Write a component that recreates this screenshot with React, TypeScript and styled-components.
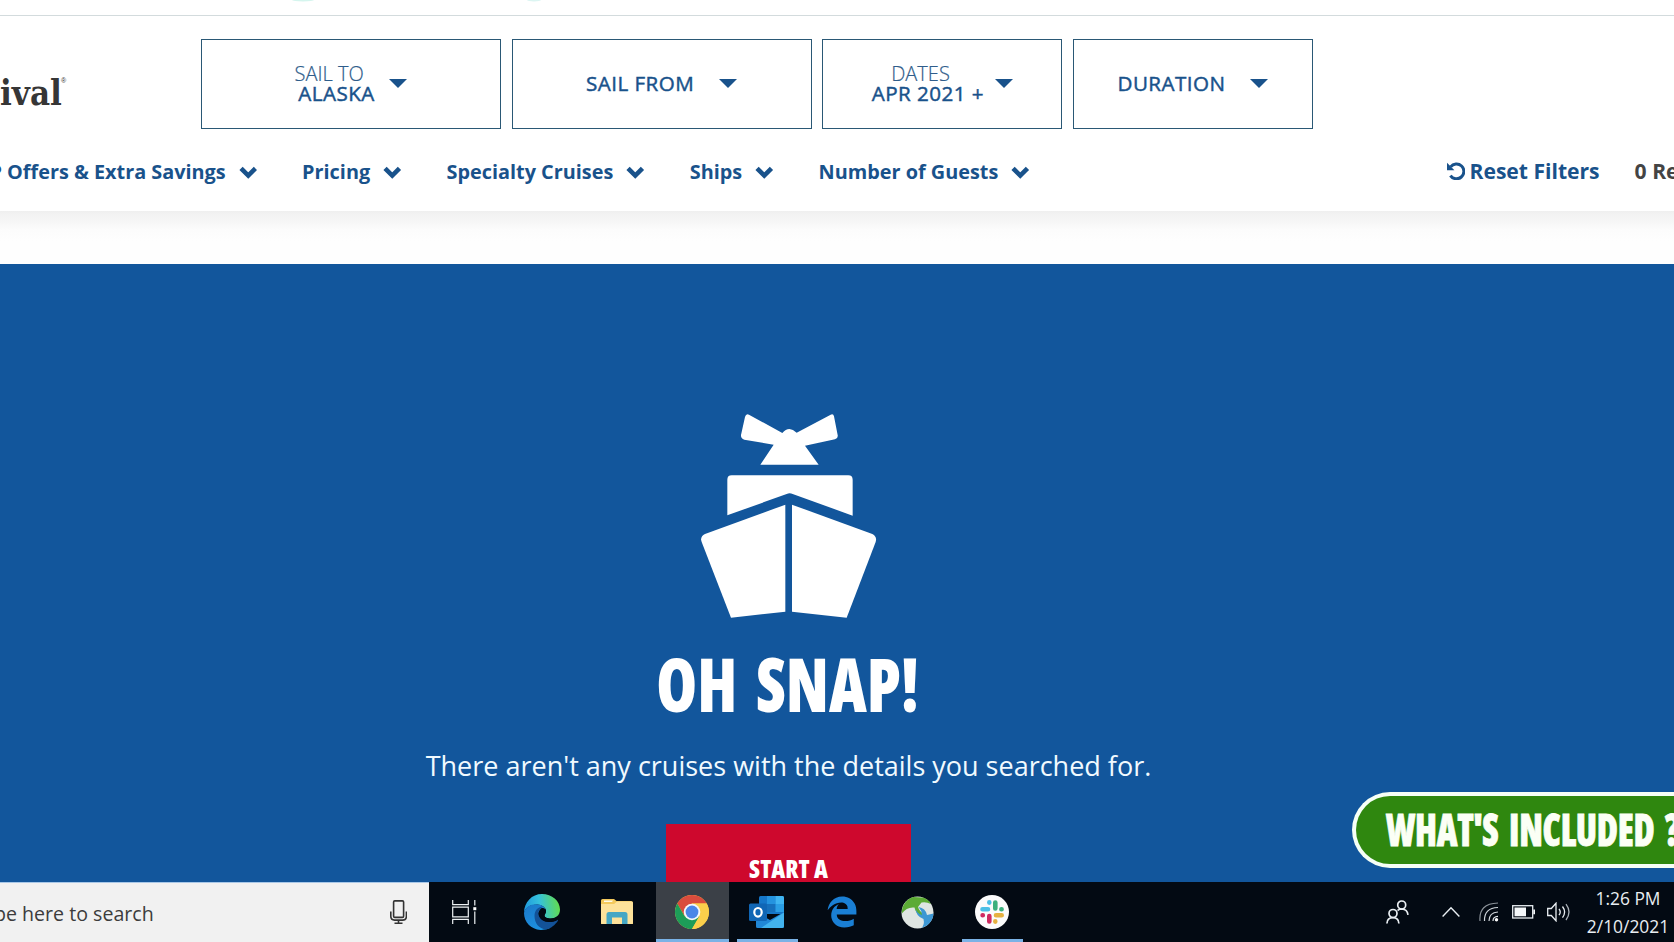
import React from "react";
import styled, { createGlobalStyle } from "styled-components";
import { FaEdgeLegacy } from "react-icons/fa6";

const navy = "#19528b";
const sans = `"Open Sans", "Noto Sans", sans-serif`;

const GlobalStyle = createGlobalStyle`
  * { box-sizing: border-box; }
  body { margin: 0; background: #fff; font-family: ${sans}; overflow: hidden; }
  svg { display: block; flex: none; }
`;

const Screen = styled.div`
  position: relative;
  display: flex;
  flex-direction: column;
  width: 1674px;
  height: 942px;
  overflow: hidden;
`;

const BrowserEdge = styled.div`
  height: 16px;
  border-bottom: 1px solid #d3dbdd;
`;

const Header = styled.header`
  display: flex;
  flex-direction: column;
  height: 195px;
  padding-top: 23px;
`;

const SearchRow = styled.div`
  display: flex;
  align-items: center;
  height: 90px;
`;

const Logo = styled.div`
  display: flex;
  align-items: flex-start;
  flex: 0 0 201px;
  height: 34px;
  margin-top: 10px;
  color: #363636;
`;

const LogoWord = styled.span`
  width: 61px;
  font: 700 36px/40px "DejaVu Serif", serif;
  font-stretch: 75%;
  transform: scaleX(0.96);
  transform-origin: 0 0;
`;

const LogoMark = styled.span`
  margin-top: 5px;
  font: 7px/8px "Liberation Sans", sans-serif;
`;

const Pickers = styled.div`
  display: flex;
  gap: 10.67px;
`;

const Picker = styled.button<{ $width: number; $gap: number }>`
  display: flex;
  align-items: center;
  justify-content: center;
  gap: ${(p) => p.$gap}px;
  width: ${(p) => p.$width}px;
  height: 90px;
  padding: 0 0 2px;
  border: 1px solid #2a5875;
  background: #fff;
  color: ${navy};
  font-family: ${sans};
`;

const PickerText = styled.span`
  display: flex;
  flex-direction: column;
  align-items: center;
  font-size: 20.6px;
  line-height: 20px;
  white-space: nowrap;
`;

const PickerLabel = styled.span`
  margin: 1px 14.6px -1px 0;
  font-size: 20px;
  font-weight: 300;
  color: #2f5d8b;
  -webkit-text-stroke: 0.2px #2f5d8b;
`;

const PickerValue = styled.span`
  font-weight: 400;
  letter-spacing: 0.45px;
  -webkit-text-stroke: 0.45px ${navy};
`;

const Triangle = styled.i`
  border: solid transparent;
  border-width: 9px 9px 0;
  border-top-color: ${navy};
`;

const FilterRow = styled.div`
  display: flex;
  align-items: center;
  justify-content: space-between;
  height: 24px;
  margin-top: 30px;
  line-height: 24px;
  font-weight: 700;
  white-space: nowrap;
  color: ${navy};
`;

const Filters = styled.nav`
  display: flex;
  gap: 45px;
  margin-left: -10.6px;
  padding-top: 2px;
`;

const Filter = styled.a`
  display: flex;
  align-items: center;
  gap: 12.9px;
  font-size: 19.85px;
  svg { margin-top: 1px; }
`;

const FilterStatus = styled.div`
  display: flex;
  gap: 35px;
  width: 227.5px;
  overflow: hidden;
  font-size: 21.1px;
`;

const Reset = styled.a`
  display: flex;
  align-items: center;
  gap: 5px;
  height: 24px;
`;

const Count = styled.span`
  color: #444;
`;

const HeaderShadow = styled.div`
  height: 53px;
  background: linear-gradient(#efefef 0, #f2f2f2 3px, #f7f7f7 12px, #fcfcfc 19px, #fefefe 30px);
`;

const Hero = styled.main`
  display: flex;
  flex-direction: column;
  align-items: center;
  height: 618px;
  padding: 149px 97px 0 0;
  overflow: hidden;
  background: #12569c;
  color: #fff;
`;

const condensed = `font-family: ${sans}; font-stretch: 75%; font-weight: 800; white-space: nowrap;`;

const Title = styled.h1`
  ${condensed}
  margin: 24.5px 0 0;
  font-size: 74px;
  line-height: 80px;
  word-spacing: 8px;
  transform: translateX(-1px) scaleX(0.89);
`;

const Message = styled.p`
  margin: 21.5px 0 0;
  font-size: 27px;
  line-height: 40px;
  color: #f1faff;
`;

const StartButton = styled.button`
  ${condensed}
  flex: none;
  width: 245px;
  height: 120px;
  margin: 38.5px 0 0;
  padding: 29.5px 0 0;
  border: 0;
  background: #ce082d;
  color: #fff;
  font-size: 24.3px;
  line-height: 30px;
  display: flex;
  justify-content: center;
`;

const IncludedTab = styled.aside`
  position: absolute;
  left: 1352px;
  top: 792px;
  width: 322px;
  height: 76px;
  padding: 8.5px 0 0 30px;
  overflow: hidden;
  border: 4px solid #f6fff6;
  border-right: 0;
  border-radius: 38px 0 0 38px;
  background: #2f870f;
`;

const IncludedText = styled.span`
  ${condensed}
  display: inline-block;
  font-size: 43.4px;
  line-height: 50px;
  letter-spacing: -0.35px;
  word-spacing: 5.5px;
  color: #fbfff5;
  transform: scaleX(0.833);
  transform-origin: 0 0;
  -webkit-text-stroke: 0.8px #fbfff5;
`;

const Taskbar = styled.footer`
  display: flex;
  height: 60px;
  background: #030a13;
  color: #e9eef2;
`;

const SearchBox = styled.div`
  display: flex;
  align-items: center;
  justify-content: space-between;
  width: 429px;
  padding: 0 22px 0 0;
  border-top: 1px solid #a9c8e8;
  background: #f1f1f1;
  color: #3c3c3c;
  font-size: 19.6px;
  white-space: nowrap;
  svg { margin-bottom: 1.5px; }
`;

const SearchText = styled.span`
  margin: 1px 0 0 -6px;
`;

const TaskView = styled.div`
  display: grid;
  place-items: center;
  width: 75.5px;
  padding-right: 4.5px;
`;

const AppCell = styled.div`
  display: flex;
  justify-content: center;
  width: 75px;
`;

const AppButton = styled.div<{ $active?: boolean; $open?: boolean }>`
  display: grid;
  place-items: center;
  width: ${(p) => (p.$active ? 73 : 61)}px;
  border-bottom: 3px solid ${(p) => (p.$active || p.$open ? "#7ab2e6" : "transparent")};
  padding-top: 3px;
  background: ${(p) => (p.$active ? "#3b4047" : "none")};
  background-clip: padding-box;
`;

const Tray = styled.div`
  display: flex;
  align-items: center;
  margin-left: auto;
  padding-right: 4.5px;
`;

const TrayIcon = styled.span<{ $after: number }>`
  margin-right: ${(p) => p.$after}px;
`;

const Clock = styled.div`
  width: 83px;
  text-align: center;
  font-size: 17.4px;
  line-height: 28px;
  white-space: nowrap;
`;

const Chevron = () => (
  <svg width="18.5" height="13" viewBox="0 0 18 12" fill="none" stroke={navy} strokeWidth="4.5">
    <path d="M2 2l7 7 7-7" />
  </svg>
);

const ResetIcon = () => (
  <svg width="18" height="18" viewBox="0 0 18 18" fill="none">
    <path d="M3.6 4.9A7.4 7.4 0 1 1 3.4 13.6" stroke={navy} strokeWidth="3" />
    <path d="M0 .8v7.4h7.4z" fill={navy} />
  </svg>
);

const ShipIcon = () => (
  <svg width="176.67" height="206.67" viewBox="120 70 530 620" fill="#fff">
    <path d="M267 75L367 130Q387 107 410 129L512 75Q520 71 522 80L533 136Q535 146 525 149L435 168L476 225H301L341 165L253 150Q242 147 243 136L255 82Q258 71 267 75Z" />
    <path d="M215 257H565Q578 257 578 270V378L398 313Q389 309 380 313L202 377V270Q202 257 215 257Z" />
    <path d="M376 345V666L213 684L125 457Q119 441 135 433Z" />
    <path d="M396 345V666L560 684L647 457Q652 441 637 433Z" />
  </svg>
);

const MicIcon = () => (
  <svg width="17" height="24" viewBox="0 0 17 24" fill="none" stroke="#333" strokeWidth="1.6">
    <rect x="3.6" y=".9" width="10" height="16.5" rx="1.2" />
    <path d="M.8 11.5v4.8q0 3.8 3.8 3.8h8q3.8 0 3.8-3.8v-4.8M8.5 20v3M4.5 23.2h8" />
  </svg>
);

const TaskViewIcon = () => (
  <svg width="25" height="24" viewBox="0 0 25 24" fill="none" stroke="#eef2f4" strokeWidth="1.2">
    <path d="M.7 0v4.6h15.6V0M.7 24v-4.6h15.6V24M.7 7.2h15.6v9.6H.7zM22.8 0v5.4M22.8 11.4V24" />
    <path d="M21.3 7.2h3v3h-3z" fill="#fff" stroke="none" />
  </svg>
);

const EdgeIcon = () => (
  <svg width="36" height="36" viewBox="0 0 36 36">
    <defs>
      <linearGradient id="edgeTop" x1="0" y1=".6" x2="1" y2=".5">
        <stop offset="0" stopColor="#1e98de" />
        <stop offset=".45" stopColor="#35c1dc" />
        <stop offset="1" stopColor="#63dc4c" />
      </linearGradient>
      <linearGradient id="edgeBody" x1="0" y1="0" x2=".4" y2="1">
        <stop offset="0" stopColor="#1b78c8" />
        <stop offset="1" stopColor="#1d90e0" />
      </linearGradient>
    </defs>
    <path d="M0 19C0 8 8 0 18 0s18 7 18 15.5c0 6-4.5 9-9 9-4 0-6.500-1.500-6.500-2.800 0-1.200 1.500-1.800 1.500-4.700 0-3.500-4-6.500-9-6.500C6 10.500 1 14 0 19z" fill="url(#edgeTop)" />
    <path d="M0 19c1-5.500 6-8.800 12-8.800 5.500 0 9.500 3 10 6-1.500-1.500-8-.7-8.500 5C13 28 20 34.500 26 34 22 36 18 36 16.500 35.900 7 35.500 0 28 0 19z" fill="url(#edgeBody)" />
    <path d="M10.500 22c0-6 4-9.500 8.500-9.500-3 1.500-4.800 4.500-4.500 7.500.5 5 5.500 8 10.500 8 3.500 0 6-1 7.800-2 1-.5 1.500.3 1 1C31 31 27 34.500 22 35.400 15 35 10.500 29 10.500 22z" fill="#135298" />
    <path d="M22 16c.2 3-1.500 4-1.500 5.700 0 1.300 2.500 2.800 6.500 2.800 2.500 0 5-1 6.700-2.800L33.500 26c-6 3.300-13 2.600-16.700-1.500-2.800-3.300-2.600-8.500.9-10.500 2 0 3.800.6 4.300 2z" fill="#030a13" />
  </svg>
);

const FolderIcon = () => (
  <svg width="32" height="26" viewBox="0 0 32 26">
    <path d="M0 1.500Q0 0 1.500 0H13l2.500 2H30q2 0 2 2v21H0z" fill="#f3c95c" />
    <path d="M0 5h13l3-2.500h14.500Q32 2.500 32 4v19.500Q32 25 30.500 25h-29Q0 25 0 23.500z" fill="#fde29a" />
    <path d="M3 1.500h9L11 3H3z" fill="#fffbe8" />
    <path d="M5.500 25V15.500q0-2.500 2.500-2.500h16q2.500 0 2.500 2.500V25H21v-6.500H11V25z" fill="#45a7c4" />
  </svg>
);

const ChromeIcon = () => (
  <svg width="34" height="34" viewBox="0 0 34 34">
    <circle cx="17" cy="17" r="17" fill="#fbcf4b" />
    <path d="M2.300 8.500A17 17 0 0 1 31.700 8.500H17L9.600 21.200z" fill="#d94c3d" />
    <path d="M2.300 8.500A17 17 0 0 0 17 34L24.400 21.200 9.600 21.200z" fill="#1d9d58" />
    <path d="M31.700 8.500A17 17 0 0 1 17 34L24.400 21.200 17 8.500z" fill="#fbcf4b" />
    <circle cx="17" cy="17" r="8.300" fill="#f4f7fa" />
    <circle cx="17" cy="17" r="6.400" fill="#4a86e8" />
  </svg>
);

const OutlookIcon = () => (
  <svg width="37" height="33" viewBox="0 0 37 33">
    <path d="M10 1.500Q10 0 11.500 0h22Q35 0 35 1.500V18H10z" fill="#1577c9" />
    <path d="M18 0h8.500v8H18z" fill="#2493df" />
    <path d="M26.500 0h7Q35 0 35 1.500V8h-8.500z" fill="#3fb4f1" />
    <path d="M18 8h8.500v8H18z" fill="#1670bd" />
    <path d="M26.500 8H35v8h-8.500z" fill="#2a9ee5" />
    <path d="M7 16l14 8 14-8v14.500q0 1.500-1.500 1.500h-25Q7 32 7 30.500z" fill="#2187d6" />
    <path d="M35 16.500V30q0 2-2 2H12z" fill="#42b3ee" />
    <rect y="7.5" width="18" height="17.5" rx="1.5" fill="#1066b5" />
    <ellipse cx="9" cy="16.3" rx="3.7" ry="4.3" fill="none" stroke="#fff" strokeWidth="2.2" />
  </svg>
);

const AnyConnectIcon = () => (
  <svg width="33" height="33" viewBox="0 0 33 33">
    <circle cx="16.5" cy="16.5" r="16" fill="#dfe5e2" />
    <path d="M.8 17.500C.5 9 6 2.500 12.500 1L21 1.500q5.500.5 9 6.500-5-2.500-9.500-1.500L17 11q1.500 5 6.500 7.500l-4 1.500q-5-3-6-8.500Q6 10.500.8 17.500z" fill="#5cab35" />
    <path d="M17.500 11q7 1 8.500 8l6.500-1.500Q32 25 26 29.500l-6 2.800q4-3 2.500-9.300Q15 20.500 14.500 12.500q1.500 5 6.500 6.500-.5-5-3.500-8z" fill="#3d97d3" />
  </svg>
);

const SlackIcon = () => (
  <svg width="34" height="34" viewBox="0 0 34 34" strokeWidth="4.6" strokeLinecap="round">
    <circle cx="17" cy="17" r="17" fill="#fbfbfb" />
    <path d="M7.500 14.300h5.500M14.300 7.400v.2" stroke="#4bbfe6" />
    <path d="M20.300 7.500v6M26.400 14.300h.2" stroke="#3bb07c" />
    <path d="M21 20.300h5.700M20.300 26.400v.2" stroke="#e6b140" />
    <path d="M14.300 21v5.500M7.600 20.300h.2" stroke="#cf2a60" />
  </svg>
);

const PeopleIcon = () => (
  <svg width="23" height="24" viewBox="0 0 23 24" fill="none" stroke="#e9eef2" strokeWidth="1.7">
    <circle cx="15.7" cy="5" r="4" />
    <circle cx="7" cy="13.5" r="4" />
    <path d="M.9 23.500q.3-5.800 6-5.800t6 5.800M11.500 10.500q2-1.500 4.300-1.500 5.500.2 6.200 5.800" />
  </svg>
);

const CaretUpIcon = () => (
  <svg width="18" height="12" viewBox="0 0 18 12" fill="none" stroke="#e9eef2" strokeWidth="1.4">
    <path d="M.6 10.500L9 1.800l8.400 8.700" />
  </svg>
);

const WifiIcon = () => (
  <svg width="20" height="20" viewBox="0 0 20 20" fill="none" strokeWidth="1.2">
    <path d="M1 19Q-.5 1.500 19 1" stroke="#8b9299" />
    <path d="M5.500 19Q5 6 19 5.500M10 19q0-8.500 9-9" stroke="#cfd5da" />
    <path d="M14 19q0-4.500 5-4.700" stroke="#dfe4e8" />
    <circle cx="17.5" cy="17.8" r="1.7" fill="#fff" />
  </svg>
);

const BatteryIcon = () => (
  <svg width="23" height="14" viewBox="0 0 23 14">
    <rect x=".7" y=".7" width="20" height="12.3" fill="none" stroke="#e9eef2" strokeWidth="1.3" />
    <path d="M2.500 2.500h11.500v8.700H2.500zM21.300 4.500H23v4.800h-1.700z" fill="#f4f7f9" />
  </svg>
);

const SpeakerIcon = () => (
  <svg width="23" height="20" viewBox="0 0 23 20" fill="none" stroke="#e9eef2" strokeWidth="1.3">
    <path d="M.7 6.500h3.600L9 1.200v17.600l-4.700-5.300H.7z" />
    <path d="M12 7q2.500 3 0 6.200M15.500 4.500q4.200 5.500 0 11.200" />
    <path d="M19 2.200q6 7.800 0 15.800" stroke="#aab1b8" />
  </svg>
);

const filters = ["P Offers & Extra Savings", "Pricing", "Specialty Cruises", "Ships", "Number of Guests"];

const pickers = [
  { label: "SAIL TO", value: "ALASKA", width: 300 },
  { value: "SAIL FROM", width: 300 },
  { label: "DATES", value: "APR 2021 +", width: 240 },
  { value: "DURATION", width: 240 },
];

const apps = [
  { icon: <EdgeIcon /> },
  { icon: <FolderIcon /> },
  { icon: <ChromeIcon />, active: true },
  { icon: <OutlookIcon />, open: true },
  { icon: <FaEdgeLegacy size={32} color="#1a7fd4" /> },
  { icon: <AnyConnectIcon /> },
  { icon: <SlackIcon />, open: true },
];

export default function App() {
  return (
    <Screen>
      <GlobalStyle />
      <BrowserEdge>
        <svg width="1674" height="3">
          <ellipse cx="303" cy="0" rx="11" ry="1.5" fill="#d5f5ee" />
          <ellipse cx="534" cy="0" rx="7" ry="1.5" fill="#dcf5f2" />
        </svg>
      </BrowserEdge>
      <Header>
        <SearchRow>
          <Logo>
            <LogoWord>ival</LogoWord>
            <LogoMark>®</LogoMark>
          </Logo>
          <Pickers>
            {pickers.map((p) => (
              <Picker key={p.value} $width={p.width} $gap={p.label ? 11 : 25}>
                <PickerText>
                  {p.label && <PickerLabel>{p.label}</PickerLabel>}
                  <PickerValue>{p.value}</PickerValue>
                </PickerText>
                <Triangle />
              </Picker>
            ))}
          </Pickers>
        </SearchRow>
        <FilterRow>
          <Filters>
            {filters.map((f) => (
              <Filter key={f}>
                {f}
                <Chevron />
              </Filter>
            ))}
          </Filters>
          <FilterStatus>
            <Reset>
              <ResetIcon />
              Reset Filters
            </Reset>
            <Count>0 Re</Count>
          </FilterStatus>
        </FilterRow>
      </Header>
      <HeaderShadow />
      <Hero>
        <ShipIcon />
        <Title>OH SNAP!</Title>
        <Message>There aren't any cruises with the details you searched for.</Message>
        <StartButton>START A</StartButton>
      </Hero>
      <IncludedTab>
        <IncludedText>WHAT'S INCLUDED ?</IncludedText>
      </IncludedTab>
      <Taskbar>
        <SearchBox>
          <SearchText>pe here to search</SearchText>
          <MicIcon />
        </SearchBox>
        <TaskView>
          <TaskViewIcon />
        </TaskView>
        {apps.map((a, i) => (
          <AppCell key={i}>
            <AppButton $active={a.active} $open={a.open}>
              {a.icon}
            </AppButton>
          </AppCell>
        ))}
        <Tray>
          <TrayIcon $after={33}><PeopleIcon /></TrayIcon>
          <TrayIcon $after={19}><CaretUpIcon /></TrayIcon>
          <TrayIcon $after={13}><WifiIcon /></TrayIcon>
          <TrayIcon $after={12.5}><BatteryIcon /></TrayIcon>
          <TrayIcon $after={16.5}><SpeakerIcon /></TrayIcon>
          <Clock>
            1:26 PM
            <br />
            2/10/2021
          </Clock>
        </Tray>
      </Taskbar>
    </Screen>
  );
}
